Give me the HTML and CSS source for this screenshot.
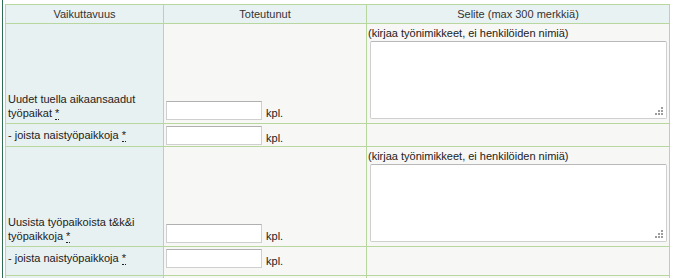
FILE: index.html
```html
<!DOCTYPE html>
<html lang="fi">
<head>
<meta charset="utf-8">
<title>Vaikuttavuus</title>
<link rel="stylesheet" href="styles.css">
</head>
<body>
<div class="page">
  <table class="impact">
    <colgroup>
      <col class="c-label">
      <col class="c-value">
      <col class="c-note">
    </colgroup>
    <thead>
      <tr>
        <th>Vaikuttavuus</th>
        <th>Toteutunut</th>
        <th>Selite (max 300 merkkiä)</th>
      </tr>
    </thead>
    <tbody>
      <tr class="main">
        <td class="label">Uudet tuella aikaansaadut työpaikat <abbr title="pakollinen">*</abbr></td>
        <td class="value"><input type="text" class="num"> <span class="unit">kpl.</span></td>
        <td class="note"><div class="hint">(kirjaa työnimikkeet, ei henkilöiden nimiä)</div><textarea class="expl"></textarea></td>
      </tr>
      <tr class="sub">
        <td class="label">- joista naistyöpaikkoja <abbr title="pakollinen">*</abbr></td>
        <td class="value"><input type="text" class="num"> <span class="unit">kpl.</span></td>
        <td class="note"></td>
      </tr>
      <tr class="main">
        <td class="label">Uusista työpaikoista t&amp;k&amp;i työpaikkoja <abbr title="pakollinen">*</abbr></td>
        <td class="value"><input type="text" class="num"> <span class="unit">kpl.</span></td>
        <td class="note"><div class="hint">(kirjaa työnimikkeet, ei henkilöiden nimiä)</div><textarea class="expl"></textarea></td>
      </tr>
      <tr class="sub sub-tall">
        <td class="label">- joista naistyöpaikkoja <abbr title="pakollinen">*</abbr></td>
        <td class="value"><input type="text" class="num"> <span class="unit">kpl.</span></td>
        <td class="note"></td>
      </tr>
      <tr class="main">
        <td class="label">Uudet tuella aikaansaadut työpaikat <abbr title="pakollinen">*</abbr></td>
        <td class="value"><input type="text" class="num"> <span class="unit">kpl.</span></td>
        <td class="note"><div class="hint">(kirjaa työnimikkeet, ei henkilöiden nimiä)</div><textarea class="expl"></textarea></td>
      </tr>
    </tbody>
  </table>
</div>
</body>
</html>
```

FILE: styles.css
```css
html, body {
  margin: 0;
  padding: 0;
  background: #ffffff;
}

body {
  font-family: "Liberation Sans", Arial, sans-serif;
  font-size: 11px;
  color: #222222;
}

.page {
  margin-left: 2px;
  border-left: 1px solid #2f6d52;
  padding: 4px 0 0 2px;
  min-height: 100vh;
  box-sizing: border-box;
}

.impact {
  border-collapse: collapse;
  table-layout: fixed;
  width: 664px;
}

.c-label { width: 158px; }
.c-value { width: 203px; }
.c-note { width: 303px; }

.impact th,
.impact td {
  border: 1px solid #b8d79e;
  padding: 0 2px;
}

.impact th {
  background: #e9f2f3;
  font-weight: normal;
  color: #333333;
  height: 18px;
  text-align: center;
  vertical-align: middle;
  line-height: 13px;
}

.impact td {
  background: #f7f7f6;
}

.impact td.label {
  background: #e8f1f1;
  vertical-align: bottom;
  line-height: 14px;
  padding: 0 3px 3px 2px;
}

tr.main td { height: 96px; }
tr.main td.value {
  vertical-align: bottom;
  padding: 0 2px 3px 2px;
}
tr.main td.note {
  vertical-align: top;
  padding: 2px 0 0 1px;
}

tr.sub td { height: 18px; }
tr.sub-tall td { height: 24px; }
tr.sub td.label { vertical-align: top; padding: 4px 3px 0 2px; }
tr.sub td.value { vertical-align: top; padding: 2px 2px 0 2px; }

abbr {
  text-decoration: none;
  border-bottom: 1px dotted #222222;
  cursor: help;
}

.num {
  width: 96px;
  height: 19px;
  box-sizing: border-box;
  border: 1px solid #cfcfcf;
  border-top-color: #b0b0b0;
  background: #ffffff;
  margin: 0;
  padding: 1px 2px;
  vertical-align: bottom;
  font: inherit;
}

.unit {
  margin-left: 1px;
  vertical-align: bottom;
  line-height: 14px;
}

.hint {
  line-height: 14px;
  margin-bottom: 1px;
}

.expl {
  display: block;
  width: 297px;
  height: 78px;
  margin-left: 2px;
  box-sizing: border-box;
  border: 1px solid #cfcfcf;
  border-top-color: #b8b8b8;
  border-radius: 2px;
  resize: none;
  font: inherit;
  padding: 2px;
  background-color: #ffffff;
  background-image:
    radial-gradient(circle, #9a9a9a 0.7px, transparent 1px),
    radial-gradient(circle, #9a9a9a 0.7px, transparent 1px),
    radial-gradient(circle, #9a9a9a 0.7px, transparent 1px),
    radial-gradient(circle, #9a9a9a 0.7px, transparent 1px),
    radial-gradient(circle, #9a9a9a 0.7px, transparent 1px),
    radial-gradient(circle, #9a9a9a 0.7px, transparent 1px);
  background-size: 2px 2px;
  background-repeat: no-repeat;
  background-position:
    right 3px bottom 3px,
    right 3px bottom 6px,
    right 3px bottom 9px,
    right 6px bottom 3px,
    right 6px bottom 6px,
    right 9px bottom 3px;
}
```
